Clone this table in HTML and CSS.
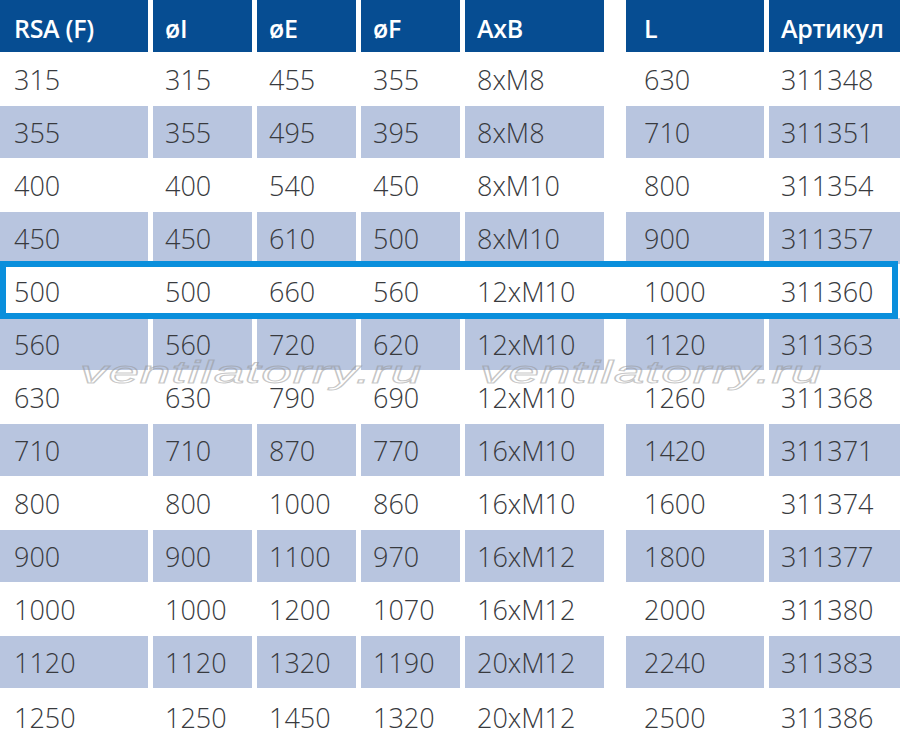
FILE: index.html
```html
<!DOCTYPE html>
<html lang="ru">
<head>
<meta charset="utf-8">
<title>RSA (F)</title>
<link rel="stylesheet" href="styles.css">
</head>
<body>
<div class="sheet">
  <div class="table">
    <div class="row head">
      <div class="cell c1">RSA (F)</div><div class="cell c2">øI</div><div class="cell c3">øE</div><div class="cell c4">øF</div><div class="cell c5">AxB</div><div class="cell c6">L</div><div class="cell c7">Артикул</div>
    </div>
    <div class="row">
      <div class="cell c1">315</div><div class="cell c2">315</div><div class="cell c3">455</div><div class="cell c4">355</div><div class="cell c5">8xM8</div><div class="cell c6">630</div><div class="cell c7">311348</div>
    </div>
    <div class="row alt">
      <div class="cell c1">355</div><div class="cell c2">355</div><div class="cell c3">495</div><div class="cell c4">395</div><div class="cell c5">8xM8</div><div class="cell c6">710</div><div class="cell c7">311351</div>
    </div>
    <div class="row">
      <div class="cell c1">400</div><div class="cell c2">400</div><div class="cell c3">540</div><div class="cell c4">450</div><div class="cell c5">8xM10</div><div class="cell c6">800</div><div class="cell c7">311354</div>
    </div>
    <div class="row alt">
      <div class="cell c1">450</div><div class="cell c2">450</div><div class="cell c3">610</div><div class="cell c4">500</div><div class="cell c5">8xM10</div><div class="cell c6">900</div><div class="cell c7">311357</div>
    </div>
    <div class="row">
      <div class="cell c1">500</div><div class="cell c2">500</div><div class="cell c3">660</div><div class="cell c4">560</div><div class="cell c5">12xM10</div><div class="cell c6">1000</div><div class="cell c7">311360</div>
    </div>
    <div class="row alt">
      <div class="cell c1">560</div><div class="cell c2">560</div><div class="cell c3">720</div><div class="cell c4">620</div><div class="cell c5">12xM10</div><div class="cell c6">1120</div><div class="cell c7">311363</div>
    </div>
    <div class="row">
      <div class="cell c1">630</div><div class="cell c2">630</div><div class="cell c3">790</div><div class="cell c4">690</div><div class="cell c5">12xM10</div><div class="cell c6">1260</div><div class="cell c7">311368</div>
    </div>
    <div class="row alt">
      <div class="cell c1">710</div><div class="cell c2">710</div><div class="cell c3">870</div><div class="cell c4">770</div><div class="cell c5">16xM10</div><div class="cell c6">1420</div><div class="cell c7">311371</div>
    </div>
    <div class="row">
      <div class="cell c1">800</div><div class="cell c2">800</div><div class="cell c3">1000</div><div class="cell c4">860</div><div class="cell c5">16xM10</div><div class="cell c6">1600</div><div class="cell c7">311374</div>
    </div>
    <div class="row alt">
      <div class="cell c1">900</div><div class="cell c2">900</div><div class="cell c3">1100</div><div class="cell c4">970</div><div class="cell c5">16xM12</div><div class="cell c6">1800</div><div class="cell c7">311377</div>
    </div>
    <div class="row">
      <div class="cell c1">1000</div><div class="cell c2">1000</div><div class="cell c3">1200</div><div class="cell c4">1070</div><div class="cell c5">16xM12</div><div class="cell c6">2000</div><div class="cell c7">311380</div>
    </div>
    <div class="row alt">
      <div class="cell c1">1120</div><div class="cell c2">1120</div><div class="cell c3">1320</div><div class="cell c4">1190</div><div class="cell c5">20xM12</div><div class="cell c6">2240</div><div class="cell c7">311383</div>
    </div>
    <div class="row last">
      <div class="cell c1">1250</div><div class="cell c2">1250</div><div class="cell c3">1450</div><div class="cell c4">1320</div><div class="cell c5">20xM12</div><div class="cell c6">2500</div><div class="cell c7">311386</div>
    </div>
  </div>
  <div class="highlight"></div>
  <div class="watermark wm1">ventilatorry.ru</div>
  <div class="watermark wm2">ventilatorry.ru</div>
</div>
</body>
</html>
```

FILE: styles.css
```css
html, body {
  margin: 0;
  padding: 0;
  background: #ffffff;
}

.sheet {
  position: relative;
  width: 900px;
  height: 745px;
  overflow: hidden;
  font-family: "Open Sans", "Noto Sans", "Liberation Sans", sans-serif;
}

.table {
  display: flex;
  flex-direction: column;
  gap: 1px;
}

.row {
  display: flex;
  gap: 5px;
  height: 52px;
}

.row.last {
  height: 56px;
}

.cell {
  display: flex;
  align-items: center;
  box-sizing: border-box;
  padding-left: 12px;
  font-size: 27px;
  font-weight: 300;
  color: #383a3e;
  white-space: nowrap;
}

.head .cell {
  background: #064d92;
  color: #ffffff;
  font-weight: 600;
  font-size: 25px;
  padding-top: 3px;
  letter-spacing: -0.3px;
}

.alt .cell {
  background: #b8c5df;
}

.c1 { width: 148px; padding-left: 14px; }
.c2 { width: 99px; }
.c3 { width: 99px; }
.c4 { width: 99px; }
.c5 { width: 139px; }
.c6 { width: 138px; margin-left: 17px; padding-left: 18px; }
.c7 { width: 131px; }

.highlight {
  position: absolute;
  left: 0;
  top: 261px;
  width: 898px;
  height: 58px;
  box-sizing: border-box;
  border: 6px solid #0a8fdc;
}

.watermark {
  position: absolute;
  top: 352px;
  font-family: "Liberation Sans", Arial, sans-serif;
  font-style: italic;
  font-size: 32px;
  line-height: 40px;
  color: transparent;
  -webkit-text-stroke: 1px rgba(150, 150, 150, 0.55);
  transform-origin: 0 0;
  transform: scaleX(1.72);
  letter-spacing: 0.5px;
  white-space: nowrap;
}

.wm1 { left: 80px; }
.wm2 { left: 480px; }
```
